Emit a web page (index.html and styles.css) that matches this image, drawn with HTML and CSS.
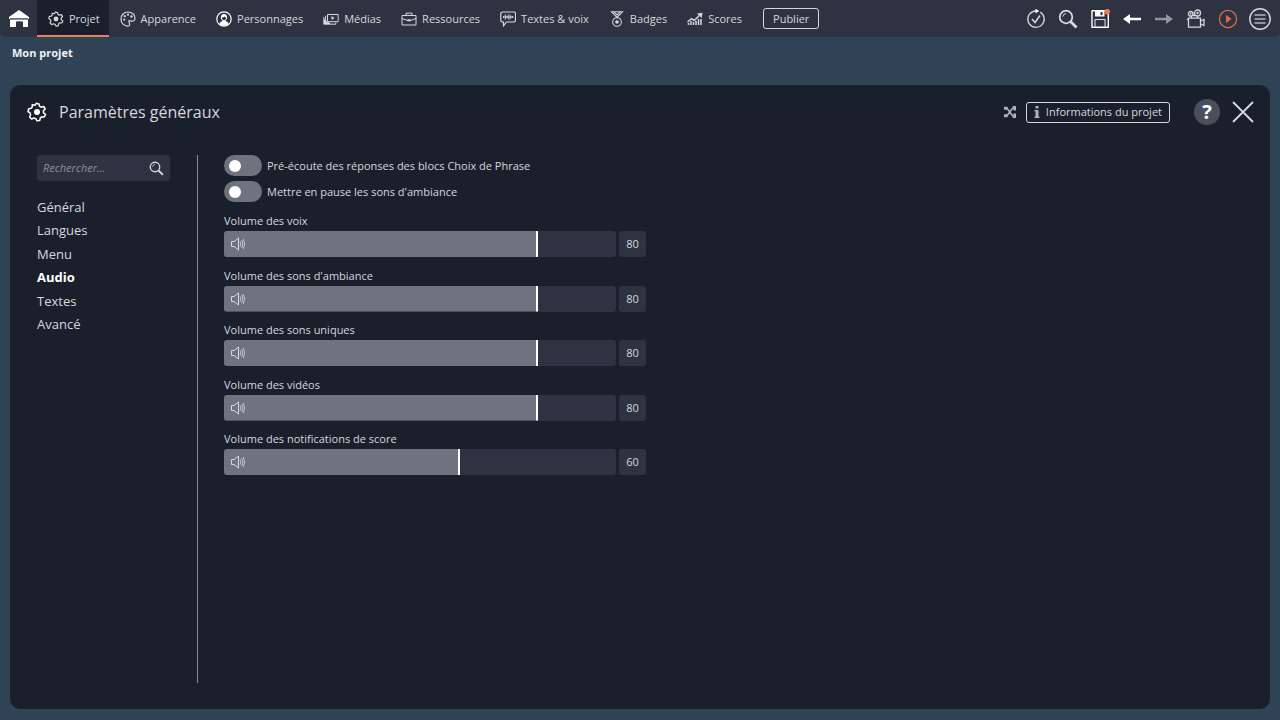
FILE: index.html
```html
<!DOCTYPE html>
<html lang="fr">
<head>
<meta charset="utf-8">
<meta name="viewport" content="width=device-width, initial-scale=1">
<title>Mon projet – Paramètres généraux</title>
<link rel="stylesheet" href="styles.css">
</head>
<body>
<svg class="symbols" aria-hidden="true">
  <symbol id="gear" viewBox="0 0 20 20"><path d="M8.2 3.2 9.4 1.2 12 2 12.4 4.2 14.2 5.2 16.7 4.5 18.2 7 16.4 8.8 16.5 10.8 18.6 12.5 17.3 15 14.8 14.8 13.2 16.1 12.8 18.5 10 18.8 8.8 16.6 6.8 16 4.6 17.1 2.6 15 3.6 12.8 3 10.8 1 9.5 1.7 6.7 4.1 6.3 5.4 4.7 5.2 2.8 Z" fill="none" stroke="currentColor" stroke-width="1.5" stroke-linejoin="round"/><circle cx="10" cy="10" r="3" fill="currentColor"/></symbol>
  <symbol id="search" viewBox="0 0 20 20"><circle cx="8" cy="8" r="6.300" fill="none" stroke="currentColor" stroke-width="1.800"/><path d="M4.800 7.600A3.300 3.300 0 0 1 8 4.600" fill="none" stroke="currentColor" stroke-width="1"/><path d="m12.500 12.500 6 6" stroke="currentColor" stroke-width="2.800"/></symbol>
  <symbol id="speaker" viewBox="0 0 16 14"><g fill="none" stroke="currentColor"><path d="M1.500 4.500h2.600L8.500 1v12L4.100 9.500H1.500Z" stroke-linejoin="round"/><path d="M10.200 4.500q1.200 2.500 0 5M11.800 3q2.200 4 0 8M13.300 2q2.800 5 0 10" stroke-width=".8"/></g></symbol>
</svg>

<header class="topbar">
  <button class="home" type="button" aria-label="Accueil"><svg class="icon-home" viewBox="0 0 20 18"><path d="M10 0 20 7v2H0V7Z" fill="currentColor"/><path d="M1 9.500h18V17h-5v-5.500H7V17H1Z" fill="currentColor"/><path d="M1 8.600h18" stroke="#2d3340" stroke-width=".8"/><path d="M8.500 11.500h3V17h-3Z" fill="#2d3340"/></svg></button>
  <nav class="tabs" aria-label="Navigation principale">
    <a class="tab tab-active" href="#projet"><svg class="icon"><use href="#gear"/></svg>Projet</a>
    <a class="tab" href="#apparence"><svg class="icon" viewBox="0 0 16 16"><path d="M8.500 15C4 15.500 1 12 1 8c0-4 3-7 7-7s7 2.500 7 6c0 2.500-1.500 3.500-3.200 3.200-1.300-.2-2-1-2.800-.4-1 .8.500 1.700.7 3.200.1 1-.3 1.800-1.200 2Z" fill="none" stroke="currentColor" stroke-width="1.200"/><g fill="currentColor"><circle cx="4.200" cy="8.500" r="1.100"/><circle cx="4.800" cy="5.200" r="1.100"/><circle cx="8" cy="3.700" r="1.100"/><circle cx="11.500" cy="5.500" r="1.200"/></g></svg>Apparence</a>
    <a class="tab" href="#personnages"><svg class="icon icon-bright" viewBox="0 0 16 16"><circle cx="8" cy="8" r="7.200" fill="none" stroke="currentColor" stroke-width="1.200"/><path d="M3.400 13c.3-2 1.600-2.300 3-2.700V9.500C4 8 4.200 3 8 3s4 5 1.600 6.500v.8c1.400.4 2.700.7 3 2.700C10.500 15.200 5.500 15.200 3.400 13Z" fill="currentColor"/><path d="M5.800 6.500c1 .2 2-.3 2.500-1 .5.600 1.200 1 1.900 1C10 10 6 10 5.800 6.500Z" fill="#2d3340"/></svg>Personnages</a>
    <a class="tab" href="#medias"><svg class="icon" viewBox="0 0 16 16"><path d="M4.500 3.500h10.700v7.200H4.500Z" fill="none" stroke="currentColor"/><path d="M.8 6v7.200h12V11.500M2.600 4.800v6.800h2" fill="none" stroke="currentColor"/><path d="M1 13V8l2 1.500 1.500 2 1.500-.5 1.500 2Z" fill="currentColor"/><path d="m8.500 5 3 2-3 2Z" fill="currentColor"/></svg>Médias</a>
    <a class="tab" href="#ressources"><svg class="icon" viewBox="0 0 16 16"><path d="M1 4.500h14v9.500H1ZM5 4.500V2.200h6v2.300M1 7.500l5 1.800h4l5-1.800" fill="none" stroke="currentColor"/><path d="M6.500 8.300h3v2h-3Z" fill="currentColor"/></svg>Ressources</a>
    <a class="tab" href="#textes"><svg class="icon" viewBox="0 0 16 16"><path d="M2.500 1h12l1 1v8l-1 1H6.500L3.500 14.800V11H2L.800 10V2Z" fill="none" stroke="currentColor" stroke-width="1.200"/><path d="M3.500 5.200v1.600M5.300 3.500v5M7.100 4.700v2.600M8.900 3.200v5.600M10.700 4.300v3.400M12.500 5.200v1.600M3 6h10.500" stroke="currentColor" stroke-width="1"/></svg>Textes &amp; voix</a>
    <a class="tab" href="#badges"><svg class="icon" viewBox="0 0 16 16"><path d="M2.500.800h11L8 6.500ZM5 1.200l3 2.800 3-2.800" fill="none" stroke="currentColor" stroke-width="1.100"/><circle cx="8" cy="11" r="4.300" fill="none" stroke="currentColor" stroke-width="1.100"/><circle cx="8" cy="11" r="1.800" fill="currentColor"/></svg>Badges</a>
    <a class="tab" href="#scores"><svg class="icon" viewBox="0 0 16 16"><path d="M.500 11 4.500 7.700l2.800 1.800 5-5" fill="none" stroke="currentColor" stroke-width="1.500"/><path d="m10 2.500 5.500-.8-.8 5.300Z" fill="currentColor"/><path d="M1.500 14v-2M4 14v-4M6.500 14v-3M9 14v-4M11.500 14V8M14 14V8" stroke="currentColor" stroke-width="1.500"/></svg>Scores</a>
  </nav>
  <button class="outline publish" type="button">Publier</button>
  <div class="tools">
    <button type="button" aria-label="Vérifier"><svg class="tool" viewBox="0 0 20 20"><path d="M14.300 3.100a8.200 8.200 0 1 1-8 -.3Q8 2 10 2" fill="none" stroke="currentColor" stroke-width="1.300"/><path d="m9.500 -.2 3.800 2.200-3.800 2.400Z" fill="#fff"/><path d="m6 10 3 3.500L14 6.500" fill="none" stroke="currentColor" stroke-width="1.500"/></svg></button>
    <button type="button" aria-label="Rechercher"><svg class="tool"><use href="#search"/></svg></button>
    <button type="button" aria-label="Enregistrer"><svg class="tool" viewBox="0 0 20 20"><path d="M2 1.700h13.500L18.300 4v14.300H2Z" fill="none" stroke="#fff" stroke-width="1.400" stroke-linejoin="round"/><path d="M5 2h9.500v5.500H5Z" fill="#fff"/><path d="M10.500 3h2v3.200h-2Z" fill="#2d3340"/><path d="M5 18v-7.500h10V18" fill="none" stroke="currentColor" stroke-width="1.100"/><circle cx="17.200" cy="2.800" r="2.800" fill="#f4744b"/></svg></button>
    <button type="button" aria-label="Annuler"><svg class="tool" viewBox="0 0 20 20"><path d="M1 10 8 5v3.800H19v2.400H8V15Z" fill="#fff"/></svg></button>
    <button type="button" aria-label="Rétablir" class="dim"><svg class="tool" viewBox="0 0 20 20"><path d="M19 10 12 5v3.800H1v2.400h11V15Z" fill="currentColor"/></svg></button>
    <button type="button" aria-label="Caméra"><svg class="tool" viewBox="0 0 20 20"><g fill="none" stroke="currentColor" stroke-width="1.300"><circle cx="4.700" cy="4.800" r="2.300"/><circle cx="11.500" cy="4" r="3"/><path d="M2.500 9.200h12v9h-12ZM14.500 12l3.500-1.500v6L14.500 15M.800 10.500h1.700M7 6.500h2M5.500 7v2M11.500 7v2"/></g><circle cx="11.500" cy="4" r="1.200" fill="currentColor"/><circle cx="4.700" cy="4.800" r=".9" fill="currentColor"/></svg></button>
    <button type="button" aria-label="Lire" class="play"><svg class="tool" viewBox="0 0 20 20"><circle cx="10" cy="10" r="8.600" fill="none" stroke="currentColor" stroke-width="1.300"/><path d="m8 5.800 5.500 4.200L8 14.200Z" fill="currentColor"/></svg></button>
    <button type="button" aria-label="Menu"><svg class="tool-menu" viewBox="0 0 22 22"><circle cx="11" cy="11" r="10.200" fill="none" stroke="currentColor" stroke-width="1.400"/><path d="M5.500 7h11M5.500 11h11M5.500 15h11" stroke="currentColor" stroke-width="1.500" opacity=".8"/></svg></button>
  </div>
</header>

<p class="project-name">Mon projet</p>

<main class="panel">
  <div class="panel-head">
    <svg class="icon-title" aria-hidden="true"><use href="#gear"/></svg>
    <h1>Paramètres généraux</h1>
    <svg class="icon-shuffle" viewBox="0 0 12 12" aria-hidden="true"><g fill="none" stroke="currentColor" stroke-width="1.600"><path d="M0 2.200h3L8.500 9.800H10M0 9.800h3L8.500 2.200H10"/></g><path d="M8.500 0H12v4.500H9.500ZM8.500 12H12V7.500H9.500ZM0 .800h3.500v3H0ZM0 8.200h3.500v3H0Z" fill="currentColor"/></svg>
    <button class="outline info" type="button"><svg class="icon-info" viewBox="0 0 6 12"><path d="M1.500 0h3v2.500h-3ZM.500 4h4v6.500h1V12h-5v-1.500h1v-5h-1Z" fill="currentColor"/></svg>Informations du projet</button>
    <button class="help" type="button">?</button>
    <button class="close" type="button" aria-label="Fermer"><svg class="icon-close" viewBox="0 0 22 22"><path d="m1 1 20 20M21 1 1 21" stroke="currentColor" stroke-width="1.800"/></svg></button>
  </div>

  <div class="panel-body">
    <aside class="side">
      <div class="search">
        <input type="search" placeholder="Rechercher..." aria-label="Rechercher">
        <svg class="icon-search" aria-hidden="true"><use href="#search"/></svg>
      </div>
      <nav class="sections" aria-label="Sections">
        <a href="#general">Général</a>
        <a href="#langues">Langues</a>
        <a href="#menu">Menu</a>
        <a class="current" href="#audio">Audio</a>
        <a href="#texte">Textes</a>
        <a href="#avance">Avancé</a>
      </nav>
    </aside>

    <section class="settings">
      <div class="switches">
        <label class="switch"><input type="checkbox" role="switch">Pré-écoute des réponses des blocs Choix de Phrase</label>
        <label class="switch"><input type="checkbox" role="switch">Mettre en pause les sons d'ambiance</label>
      </div>
      <div class="volumes">
        <div class="volume"><label for="v1">Volume des voix</label><div class="track"><input id="v1" type="range" value="80"><svg class="speaker"><use href="#speaker"/></svg></div><output for="v1">80</output></div>
        <div class="volume"><label for="v2">Volume des sons d'ambiance</label><div class="track"><input id="v2" type="range" value="80"><svg class="speaker"><use href="#speaker"/></svg></div><output for="v2">80</output></div>
        <div class="volume"><label for="v3">Volume des sons uniques</label><div class="track"><input id="v3" type="range" value="80"><svg class="speaker"><use href="#speaker"/></svg></div><output for="v3">80</output></div>
        <div class="volume"><label for="v4">Volume des vidéos</label><div class="track"><input id="v4" type="range" value="80"><svg class="speaker"><use href="#speaker"/></svg></div><output for="v4">80</output></div>
        <div class="volume"><label for="v5">Volume des notifications de score</label><div class="track"><input id="v5" type="range" value="60"><svg class="speaker"><use href="#speaker"/></svg></div><output for="v5">60</output></div>
      </div>
    </section>
  </div>
</main>
</body>
</html>
```
FILE: styles.css
```css
* { box-sizing: border-box; }
body {
  margin: 0;
  min-height: 100vh;
  display: flex;
  flex-direction: column;
  background: #304256;
  color: #d6d8dc;
  font: 11px/14px "Open Sans", sans-serif;
}
a { color: inherit; text-decoration: none; }
button { font: inherit; color: inherit; background: none; border: 0; padding: 0; cursor: pointer; }
svg { display: block; flex: none; }
.symbols { position: absolute; width: 0; height: 0; }

.topbar { display: flex; align-items: center; height: 37px; background: #2d3340; border-radius: 0 0 6px 6px; }
.home { width: 37px; display: flex; justify-content: center; color: #fff; }
.icon-home { width: 20px; height: 18px; }
.tabs { display: flex; align-self: stretch; }
.tab { display: flex; align-items: center; gap: 5px; padding: 2px 9px 0 11px; border-bottom: 2px solid transparent; }
.tab-active { background: #1a1f2c; border-bottom-color: #e8805c; }
.icon { width: 16px; height: 16px; }
.icon-bright { color: #fff; }
.outline { border: 1px solid #d4d6da; border-radius: 3px; height: 21px; }
.publish { margin-left: 12px; padding: 0 9px; }
.tools { display: flex; margin-left: auto; padding-right: 4px; }
.tools button { width: 32px; height: 32px; display: flex; align-items: center; justify-content: center; }
.tool { width: 20px; height: 20px; }
.tool-menu { width: 22px; height: 22px; }
.tools .dim { color: #92969a; }
.tools .play { color: #d9694a; }

.project-name { margin: 0; padding: 9px 12px 25px; font-weight: 700; color: #f0f1f3; }

.panel { flex: 1; display: flex; flex-direction: column; margin: 0 10px 11px; background: #1a1f2c; border-radius: 10px; }
.panel-head { display: flex; align-items: center; height: 54px; padding: 0 16px 0 17px; }
.icon-title { width: 20px; height: 20px; color: #fff; }
h1 { margin: 0 auto 0 12px; font-size: 16px; line-height: 24px; font-weight: 400; }
.icon-shuffle { width: 12px; height: 12px; color: #aeb1b8; }
.info { display: flex; align-items: center; gap: 6px; margin-left: 10px; padding: 0 7px; }
.icon-info { width: 6px; height: 12px; color: #aeb1b8; }
.help { width: 26px; height: 26px; margin-left: 24px; border-radius: 50%; background: #4a4f5d; color: #fff; font-size: 20px; line-height: 26px; font-weight: 700; }
.close { margin-left: 12px; }
.icon-close { width: 22px; height: 22px; }

.panel-body { flex: 1; display: flex; padding: 16px 27px 26px; }
.side { width: 161px; padding-right: 27px; border-right: 1px solid #878b94; }
.search { display: flex; align-items: center; height: 26px; padding: 0 6px; background: #2d3340; border-radius: 3px; }
.search input { flex: 1; min-width: 0; padding: 0; border: 0; outline: 0; background: none; color: inherit; font: inherit; }
.search input::placeholder { color: #8b8f98; font-style: italic; opacity: 1; }
.icon-search { width: 15px; height: 15px; }
.sections { display: grid; grid-auto-rows: 1fr; align-items: center; min-height: 141px; margin-top: 14px; font-size: 13px; line-height: 20px; }
.sections .current { font-weight: 700; color: #fff; }

.settings { flex: 1; max-width: 448px; padding-left: 26px; }
.switches { display: grid; gap: 5px; }
.switch { display: flex; align-items: center; gap: 5px; }
.switch input { appearance: none; flex: none; width: 38px; height: 21px; margin: 0; padding: 0 5px; display: flex; align-items: center; border-radius: 11px; background: #6e7380; }
.switch input::before { content: ""; width: 12px; height: 12px; border-radius: 50%; background: #fff; }
.switch input:checked { justify-content: flex-end; }
.volumes { display: flex; flex-direction: column; justify-content: space-between; min-height: 261px; margin-top: 12px; }
.volume { display: grid; grid-template-columns: 1fr 27px; gap: 3px; }
.volume label { grid-column: 1 / -1; }
.track { position: relative; height: 26px; }
.track input { appearance: none; display: block; width: 100%; height: 100%; margin: 0; overflow: hidden; border-radius: 3px; background: #2d3340; }
.track input::-webkit-slider-thumb { appearance: none; width: 2px; height: 26px; background: #fff; box-shadow: -501px 0 0 500px #6e7380; clip-path: inset(0 0 0 -500px); }
.speaker { position: absolute; left: 6px; top: 6px; width: 16px; height: 14px; pointer-events: none; }
output { display: flex; align-items: center; justify-content: center; height: 26px; border-radius: 3px; background: #2d3340; }
```
